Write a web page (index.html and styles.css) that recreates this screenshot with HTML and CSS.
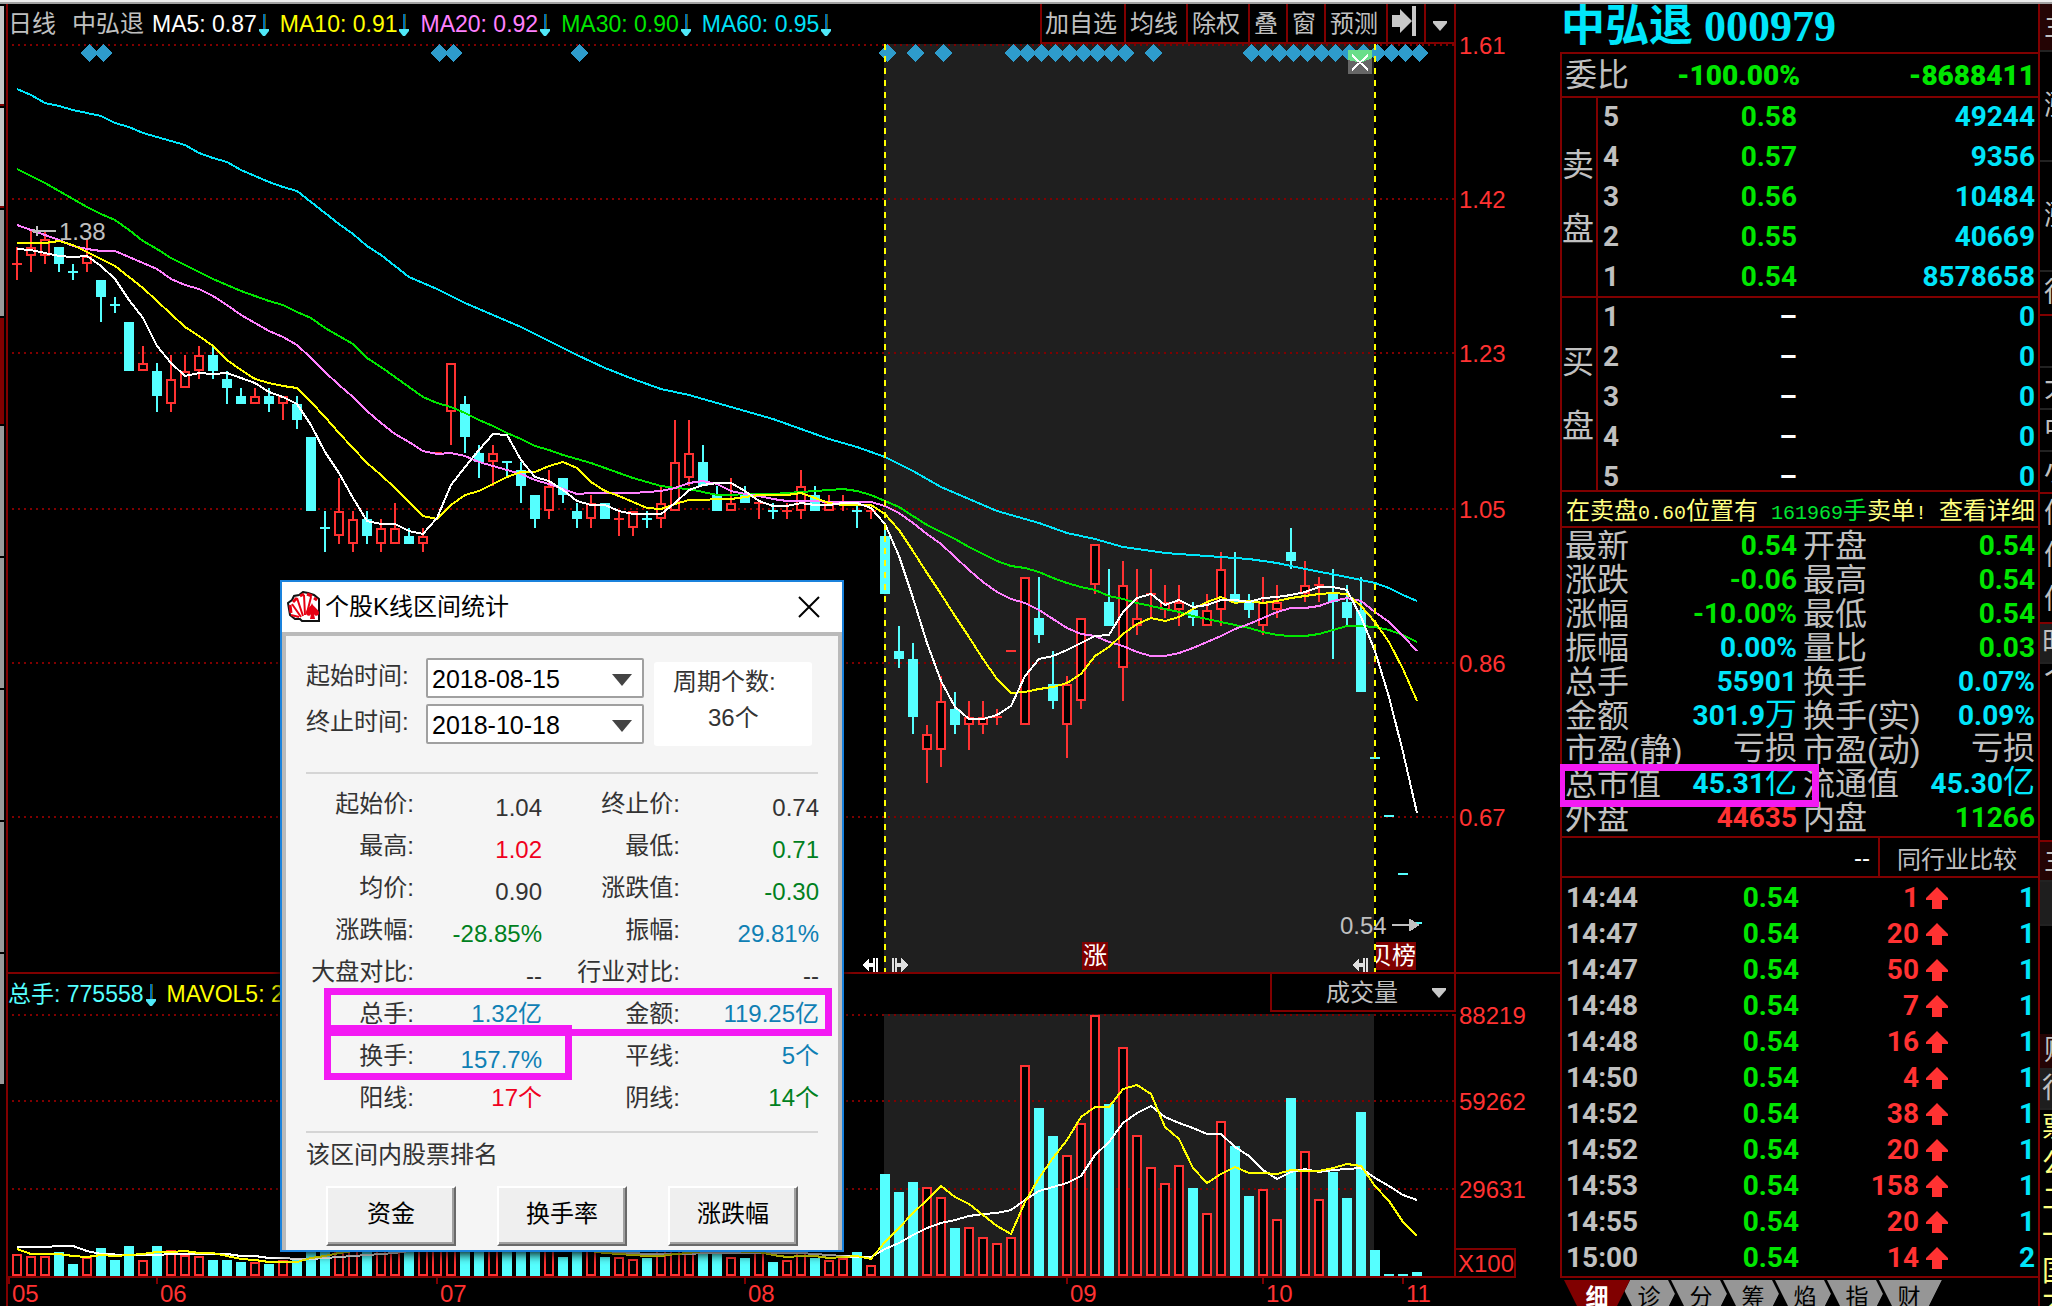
FILE: index.html
```html
<!DOCTYPE html>
<html lang="zh-CN">
<head>
<meta charset="utf-8">
<title>中弘退 000979</title>
<link rel="stylesheet" href="styles.css">
</head>
<body>
<div class="topstrip"></div>
<div class="app">
  <nav class="rail-left">
    <i class="r1"></i><i class="r1"></i><i class="r2"></i><i class="r3"></i><i class="r4"></i><i class="r4"></i><i class="r4"></i><i class="r4"></i><i class="r4"></i>
  </nav>

  <main class="chart">
    <header class="ma-bar">
      <span class="period">日线</span><span class="stock">中弘退</span>
      <span class="ma white">MA5: 0.87<svg class="down"><use href="#down"/></svg></span>
      <span class="ma yellow">MA10: 0.91<svg class="down"><use href="#down"/></svg></span>
      <span class="ma pink">MA20: 0.92<svg class="down"><use href="#down"/></svg></span>
      <span class="ma green">MA30: 0.90<svg class="down"><use href="#down"/></svg></span>
      <span class="ma sky">MA60: 0.95<svg class="down"><use href="#down"/></svg></span>
      <div class="tools">
        <button class="t3">加自选</button><button class="t2">均线</button><button class="t2">除权</button><button class="t1">叠</button><button class="t1">窗</button><button class="t2">预测</button><button class="t1" aria-label="移到最右"><svg width="24" height="30"><path d="M0 9h8V3l12 12L8 27v-6H0zM20 0h4v30h-4z"/></svg></button><button class="t0" aria-label="更多"><svg width="14" height="10"><path d="M0 0h14v2L7 10 0 2z"/></svg></button>
      </div>
    </header>
    <svg class="pane price" id="price"></svg>
    <div class="vol-bar">
      <span class="ma aqua"><b>总手</b>: 775558<svg class="down"><use href="#down"/></svg></span>
      <span class="ma yellow">MAVOL5: 29410</span>
      <button class="indicator">成交量<svg width="14" height="10"><path d="M0 0h14v2L7 10 0 2z"/></svg></button>
    </div>
    <svg class="pane volume" id="volume"></svg>

    <section class="dialog" role="dialog" aria-labelledby="dlg-title">
      <header>
        <svg width="34" height="32" viewBox="0 0 34 32">
          <path d="M2 18 1 12 5 9 7 5 12 4 16 1 21 2 27 4 32 8V30H15L13 28H8L3 24z" fill="#fff" stroke="#111" stroke-width="2"/>
          <path d="M4 22 3 14M6 11 10 7M13 5l4-2M20 3l5 2M27 7l3 2" stroke="#e60012" stroke-width="3" fill="none"/>
          <path d="M5 13 14 26M10 7 16 25M17 4 18 24M24 6 20 22M4 24l8 2" stroke="#e60012" stroke-width="2" fill="none"/>
          <path d="M25 12C24 16 19 18 19 22c0 3 4 4 5 1l-1 5h5l-1-5c1 3 5 2 5-1 0-4-6-6-7-10z" fill="#e60012"/>
        </svg>
        <h1 id="dlg-title">个股K线区间统计</h1>
        <button class="close" aria-label="关闭"><svg width="22" height="22"><path d="M1 1 21 21M21 1 1 21"/></svg></button>
      </header>
      <div class="dlg-body">
        <div class="range">
          <div class="fields">
            <div class="field"><label for="from">起始时间:</label><select id="from"><option>2018-08-15</option></select></div>
            <div class="field"><label for="to">终止时间:</label><select id="to"><option>2018-10-18</option></select></div>
          </div>
          <div class="count">周期个数:<span>36个</span></div>
        </div>
        <table class="figures">
          <tr><th>起始价:</th><td class="n">1.04</td><th>终止价:</th><td class="n">0.74</td></tr>
          <tr><th>最高:</th><td class="n c-red">1.02</td><th>最低:</th><td class="n c-green">0.71</td></tr>
          <tr><th>均价:</th><td class="n">0.90</td><th>涨跌值:</th><td class="n c-green">-0.30</td></tr>
          <tr><th>涨跌幅:</th><td class="n c-green">-28.85%</td><th>振幅:</th><td class="n c-blue">29.81%</td></tr>
          <tr><th>大盘对比:</th><td class="n">--</td><th>行业对比:</th><td class="n">--</td></tr>
          <tr><th>总手:</th><td class="c-blue">1.32亿</td><th>金额:</th><td class="c-blue">119.25亿</td></tr>
          <tr><th>换手:</th><td class="n c-blue">157.7%</td><th>平线:</th><td class="c-blue">5个</td></tr>
          <tr><th>阳线:</th><td class="c-red">17个</td><th>阴线:</th><td class="c-green">14个</td></tr>
        </table>
        <h2>该区间内股票排名</h2>
        <div class="ranks"><button>资金</button><button>换手率</button><button>涨跌幅</button></div>
      </div>
      <div class="mark mark-volume"></div>
      <div class="mark mark-turnover"></div>
    </section>
  </main>

  <aside class="quote">
    <h1 class="title">中弘退 000979</h1>
    <div class="box">
      <div class="ratio"><span>委比</span><b>-100.00%</b><b>-8688411</b></div>
      <div class="side sell"><div class="tag">卖<br>盘</div>
        <table>
          <tr><th>5</th><td class="p">0.58</td><td>49244</td></tr>
          <tr><th>4</th><td class="p">0.57</td><td>9356</td></tr>
          <tr><th>3</th><td class="p">0.56</td><td>10484</td></tr>
          <tr><th>2</th><td class="p">0.55</td><td>40669</td></tr>
          <tr><th>1</th><td class="p">0.54</td><td>8578658</td></tr>
        </table>
      </div>
      <div class="side buy"><div class="tag">买<br>盘</div>
        <table>
          <tr><th>1</th><td class="none">–</td><td>0</td></tr>
          <tr><th>2</th><td class="none">–</td><td>0</td></tr>
          <tr><th>3</th><td class="none">–</td><td>0</td></tr>
          <tr><th>4</th><td class="none">–</td><td>0</td></tr>
          <tr><th>5</th><td class="none">–</td><td>0</td></tr>
        </table>
      </div>
      <a class="notice" href="#"><span>在卖盘<i>0.60</i>位置有</span><span><em><i>161969</i>手</em>卖单<i>! </i>查看详细</span></a>
      <div class="stats-wrap">
        <table class="stats">
          <colgroup><col class="c1"><col class="c2"><col class="c3"><col class="c2"></colgroup>
          <tr><th>最新</th><td class="up">0.54</td><th>开盘</th><td class="up">0.54</td></tr>
          <tr><th>涨跌</th><td class="up">-0.06</td><th>最高</th><td class="up">0.54</td></tr>
          <tr><th>涨幅</th><td class="up">-10.00%</td><th>最低</th><td class="up">0.54</td></tr>
          <tr><th>振幅</th><td>0.00%</td><th>量比</th><td class="up">0.03</td></tr>
          <tr><th>总手</th><td>55901</td><th>换手</th><td>0.07%</td></tr>
          <tr><th>金额</th><td>301.9<u>万</u></td><th>换手(实)</th><td>0.09%</td></tr>
          <tr><th>市盈(静)</th><td class="loss"><u>亏损</u></td><th>市盈(动)</th><td class="loss"><u>亏损</u></td></tr>
          <tr><th>总市值</th><td>45.31<u>亿</u></td><th>流通值</th><td>45.30<u>亿</u></td></tr>
          <tr><th>外盘</th><td class="red">44635</td><th>内盘</th><td class="up">11266</td></tr>
        </table>
        <div class="mark mark-cap"></div>
      </div>
      <div class="compare"><span>--</span><button>同行业比较</button></div>
      <table class="ticks">
        <colgroup><col class="k1"><col class="k2"><col class="k3"><col class="k4"><col></colgroup>
        <tr><th>14:44</th><td>0.54</td><td class="red">1</td><td><svg><use href="#up"/></svg></td><td class="cyan">1</td></tr>
        <tr><th>14:47</th><td>0.54</td><td class="red">20</td><td><svg><use href="#up"/></svg></td><td class="cyan">1</td></tr>
        <tr><th>14:47</th><td>0.54</td><td class="red">50</td><td><svg><use href="#up"/></svg></td><td class="cyan">1</td></tr>
        <tr><th>14:48</th><td>0.54</td><td class="red">7</td><td><svg><use href="#up"/></svg></td><td class="cyan">1</td></tr>
        <tr><th>14:48</th><td>0.54</td><td class="red">16</td><td><svg><use href="#up"/></svg></td><td class="cyan">1</td></tr>
        <tr><th>14:50</th><td>0.54</td><td class="red">4</td><td><svg><use href="#up"/></svg></td><td class="cyan">1</td></tr>
        <tr><th>14:52</th><td>0.54</td><td class="red">38</td><td><svg><use href="#up"/></svg></td><td class="cyan">1</td></tr>
        <tr><th>14:52</th><td>0.54</td><td class="red">20</td><td><svg><use href="#up"/></svg></td><td class="cyan">1</td></tr>
        <tr><th>14:53</th><td>0.54</td><td class="red">158</td><td><svg><use href="#up"/></svg></td><td class="cyan">1</td></tr>
        <tr><th>14:55</th><td>0.54</td><td class="red">20</td><td><svg><use href="#up"/></svg></td><td class="cyan">1</td></tr>
        <tr><th>15:00</th><td>0.54</td><td class="red">14</td><td><svg><use href="#up"/></svg></td><td class="cyan">2</td></tr>
      </table>
    </div>
    <div class="tabs"><button class="on">细</button><button>诊</button><button>分</button><button>筹</button><button>焰</button><button>指</button><button>财</button></div>
  </aside>

  <aside class="rail-right">
    <div class="cell h48 wine">主</div>
    <div class="cell h110">涨</div>
    <div class="cell h110">涨</div>
    <div class="cell h44 redline">得</div>
    <div class="cell h52"></div>
    <div class="cell h42">大</div>
    <div class="cell h42">中</div>
    <div class="cell h42 redline">小</div>
    <div class="cell h42 plain">停</div>
    <div class="cell h42 plain">停</div>
    <div class="cell h46 redline">停</div>
    <div class="cell h40 dark">时</div>
    <div class="cell h178 redline top">个</div>
    <div class="cell h40 wine">主</div>
    <div class="cell h44 dark"></div>
    <div class="cell h108 plain"></div>
    <div class="cell h36 wine">财</div>
    <div class="cell h40 dark">行</div>
    <div class="news">票公二一国不</div>
  </aside>
</div>

<svg width="0" height="0" class="defs">
  <defs>
    <symbol id="down" viewBox="0 0 10 24"><path d="M4 2h2v18H4z" fill="#0070b8"/><path d="M6 2h1v16H6z" fill="#505800"/><path d="M0 17h10v2l-4 5H4l-4-5z" fill="#50e8f8"/></symbol>
    <symbol id="up" viewBox="0 0 22 22"><path d="M11 0 22 11v2h-6v9H6v-9H0v-2z" fill="#ff3232"/></symbol>
  </defs>
</svg>
<script src="chart.js"></script>
</body>
</html>
```
FILE: styles.css
```css
* { box-sizing: border-box; }
body {
  margin: 0;
  height: 100vh;
  overflow: hidden;
  display: flex;
  flex-direction: column;
  background: #000;
  color: #c0c0c0;
  font: 24px/28px "Liberation Sans", "Noto Sans CJK SC", sans-serif;
}
button, select { font: inherit; color: inherit; margin: 0; }
h1, h2 { margin: 0; font-weight: 400; }
table { border-collapse: collapse; }
th, td { padding: 0; font-weight: inherit; white-space: nowrap; }
u, em, i { text-decoration: none; font-style: normal; }
.defs { position: absolute; }

.topstrip { flex: none; height: 4px; background: #ececec; border-bottom: 2px solid #a0a0a0; }
.app { flex: 1; display: flex; min-height: 0; }

.rail-left { flex: none; width: 6px; padding: 2px 2px 0 0; display: flex; flex-direction: column; gap: 2px; }
.rail-left i { display: block; }
.r1 { height: 100px; background: #c4c4c4; border-bottom: 2px solid #800000; }
.r2 { height: 106px; background: #999; }
.r3 { height: 106px; background: #800000; }
.r4 { height: 130px; background: #999; }

/* chart area */
.chart { flex: 1; min-width: 0; position: relative; border-left: 2px solid #800000; display: flex; flex-direction: column; }
.ma-bar { flex: none; height: 40px; display: flex; align-items: center; margin-right: 104px; border-right: 2px solid #800000; font-size: 23px; white-space: nowrap; }
.period, .stock { font-size: 24px; }
.period { width: 64px; }
.stock { width: 80px; }
.ma { flex: none; display: flex; align-items: center; padding-right: 11px; }
.down { width: 10px; height: 24px; margin-left: 2px; }
.white { color: #fff; }
.yellow { color: #ff0; }
.pink { color: #ff80ff; }
.green { color: #00e600; }
.sky { color: #00e0f8; }
.aqua { color: #5ff; }
.aqua b { font-weight: 400; }
.tools { display: flex; align-self: stretch; margin-left: auto; }
.tools button { border: solid #800000; border-width: 0 0 2px 2px; background: #000; padding: 2px 4px 0 0; font-size: 24px; line-height: 28px; white-space: nowrap; }
.tools .t0 { padding: 0; }
.tools svg, .indicator svg { fill: #c8c8c8; }
.t0 { width: 30px; }
.t1 { width: 38px; }
.t2 { width: 62px; }
.t3 { width: 84px; }
.pane { flex: none; display: block; width: 100%; overflow: visible; shape-rendering: crispEdges; }
.price { height: 928px; }
.volume { height: 292px; }
.vol-bar { flex: none; height: 42px; display: flex; align-items: center; border-top: 2px solid #800000; padding-right: 104px; font-size: 23px; white-space: nowrap; }
.indicator { width: 186px; height: 38px; align-self: flex-start; margin-left: auto; border: solid #800000; border-width: 0 2px 2px; background: #000; display: flex; align-items: center; justify-content: flex-end; gap: 34px; padding: 2px 8px 0 10px; font-size: 24px; }
.pane text { font-size: 24px; fill: #ff3232; }
.pane text.grey { fill: #c0c0c0; }
.pane text.tag { fill: #fff; }

/* statistics dialog */
.dialog { position: absolute; left: 272px; top: 576px; width: 564px; height: 672px; border: 2px solid #1a82dc; background: #fff; color: #333; display: flex; flex-direction: column; box-shadow: 0 2px 10px #000; }
.dialog header { flex: none; height: 50px; display: flex; align-items: center; padding: 0 22px 0 5px; color: #000; }
.dialog header h1 { font-size: 24px; margin-left: 4px; flex: 1; }
.close { border: 0; background: none; padding: 0; display: flex; }
.close path { stroke: #000; stroke-width: 2; }
.dlg-body { flex: 1; border: solid #bababa; border-width: 4px 4px 0; background: #f5f5f5; padding: 22px 20px 4px; }
.range { display: flex; gap: 10px; height: 116px; border-bottom: 2px solid #d5d5d5; }
.fields { display: flex; flex-direction: column; gap: 6px; }
.field { position: relative; display: flex; }
.field label { width: 120px; line-height: 36px; }
.field select { width: 218px; height: 40px; border: 2px solid #a0a0a0; border-radius: 2px; padding: 2px 4px 0; color: #000; background: #fff; font-size: 25px; appearance: none; }
.field::after { content: ""; position: absolute; right: 12px; top: 16px; border: solid transparent; border-width: 12px 10px 0; border-top-color: #444; }
.count { width: 158px; height: 84px; margin-top: 4px; padding-top: 4px; background: #fff; border-radius: 3px; line-height: 32px; padding-left: 19px; }
.count span { display: block; padding-left: 35px; line-height: 40px; }
.figures { width: 513px; table-layout: fixed; margin-top: 9px; }
.figures tr { height: 42px; }
.figures th { width: 108px; text-align: right; }
.figures td { width: 128px; text-align: right; }
.figures th + td + th { width: 138px; }
.figures td:last-child { width: 139px; }
.figures td.n { padding-top: 8px; }
.c-red { color: #f00020; }
.c-green { color: #008020; }
.c-blue { color: #0f80b4; }
.dlg-body h2 { border-top: 2px solid #d5d5d5; margin-top: 12px; padding-top: 8px; font-size: 24px; line-height: 28px; }
.ranks { display: flex; gap: 41px; padding: 17px 0 0 20px; }
.ranks button { width: 130px; height: 60px; background: #efefef; color: #000; border: 2px solid; border-color: #fff #696969 #696969 #fff; box-shadow: inset -2px -2px #a0a0a0; padding: 0 0 4px; }
.mark { position: absolute; border: 7px solid #f31af3; pointer-events: none; }
.mark-volume { left: 42px; top: 406px; width: 508px; height: 48px; }
.mark-turnover { left: 42px; top: 443px; width: 248px; height: 55px; }

/* quote panel */
.quote { flex: none; width: 480px; border-right: 2px solid #800000; overflow: hidden; font: bold 28px/32px Roboto, "Noto Sans CJK SC", sans-serif; color: #00e5fa; }
.title { height: 48px; padding-left: 1px; font: bold 44px/46px "Liberation Serif", "Noto Sans CJK SC", serif; white-space: nowrap; }
.box { border: solid #800000; border-width: 2px 0 2px 2px; }
.ratio { display: grid; grid-template-columns: 110px 125px 1fr; height: 44px; align-items: center; border-bottom: 2px solid #800000; color: #00e600; text-align: right; padding: 0 3px; }
.ratio b { padding-top: 2px; }
.ratio span, .stats th, .tag, .quote u { font: 400 32px/34px "Liberation Sans", "Noto Sans CJK SC", sans-serif; }
.ratio span, .stats th, .tag { color: #c0c0c0; text-align: left; }
.side { display: flex; border-bottom: 2px solid #800000; }
.sell { height: 200px; }
.buy { height: 194px; }
.side .tag { width: 36px; border-right: 2px solid #800000; line-height: 64px; display: flex; align-items: center; }
.side table { flex: 1; table-layout: fixed; margin-right: 3px; height: 200px; }
.side tr { height: 40px; }
.side th { width: 40px; padding: 0 0 2px 5px; text-align: left; color: #c0c0c0; }
.side td { text-align: right; padding-bottom: 2px; }
.side .p, .side .none { width: 159px; color: #00e600; }
.side .none { color: #fff; }
.notice { display: flex; justify-content: space-between; height: 36px; padding: 0 3px 0 4px; border-bottom: 2px solid #800000; color: #ffff80; text-decoration: none; font: 400 24px/34px "Noto Sans CJK SC", sans-serif; white-space: pre; }
.notice i { font: 400 20px/30px "Liberation Mono", monospace; }
.notice em { color: #00e632; }
.stats-wrap { position: relative; height: 310px; border-bottom: 2px solid #800000; padding: 1px 3px 0; }
.stats { width: 100%; table-layout: fixed; }
.stats tr { height: 34px; line-height: 28px; }
.stats td { text-align: right; }
.quote .stats u, .quote .stats th { line-height: 24px; }
.c1 { width: 111px; }
.c2 { width: 121px; }
.c3 { width: 117px; }
.stats th:nth-child(3) { padding-left: 6px; }
.up { color: #00e600; }
.red { color: #ff3232; }
.cyan { color: #00e5fa; }
.loss { color: #c0c0c0; }
.mark-cap { left: -4px; top: 236px; width: 261px; height: 43px; }
.compare { display: flex; height: 40px; border-bottom: 2px solid #800000; justify-content: flex-end; font: 400 24px/36px "Liberation Sans", "Noto Sans CJK SC", sans-serif; color: #fff; }
.compare span { padding: 2px 8px 0 0; }
.compare button { width: 160px; border: 0; border-left: 2px solid #800000; background: #000; color: #c0c0c0; padding: 4px 4px 0 0; }
.ticks { width: 469px; margin: 2px 3px 0 4px; table-layout: fixed; color: #00e600; }
.ticks tr { height: 36px; }
.ticks th { text-align: left; color: #c0c0c0; }
.ticks td { text-align: right; line-height: 34px; }
.ticks svg { width: 22px; height: 22px; display: block; margin: 0 0 0 7px; }
.k1 { width: 110px; }
.k2 { width: 123px; }
.k3 { width: 120px; }
.k4 { width: 36px; }
.tabs { display: flex; padding: 2px 0 0 4px; }
.tabs button { position: relative; flex: none; width: 66px; height: 28px; margin-right: -14px; border: 0; padding: 2px 0 0; background: #000; color: #000; font: 400 23px/26px "Noto Sans CJK SC", sans-serif; clip-path: polygon(0 0, 100% 0, 52px 100%, 14px 100%); z-index: 0; display: flex; justify-content: center; }
.tabs button::before { content: ""; position: absolute; inset: 0; z-index: -1; background: #969696; clip-path: polygon(3px 0, 100% 0, 52px 100%, 17px 100%); }
.tabs .on { z-index: 1; color: #fff; font-weight: 700; }
.tabs .on::before { background: #800000; clip-path: none; }

/* clipped panel at the right edge */
.rail-right { flex: none; width: 12px; overflow: hidden; font-size: 28px; line-height: 28px; }
.cell { display: flex; align-items: center; padding-left: 4px; border-bottom: 2px solid #222; white-space: nowrap; }
.plain { border-color: #000; }
.redline { border-color: #800000; }
.wine { background: #240404; }
.dark { background: #1e1e1e; padding-left: 2px; }
.top { align-items: flex-start; }
.h36 { height: 36px; } .h40 { height: 40px; } .h42 { height: 42px; } .h44 { height: 44px; } .h46 { height: 46px; } .h48 { height: 48px; }
.h52 { height: 52px; } .h108 { height: 108px; } .h110 { height: 110px; } .h178 { height: 178px; }
.news { width: 28px; padding-left: 2px; color: #ffff80; line-height: 36px; word-break: break-all; }
```
FILE: chart.js
```js
// Candles: [rising, body high, body low, high, low], prices in cents.
const candles = [
[1,134,134,136,132],[1,136,135,138,133],[1,137,135,138,134],[0,136,134,136,133],[0,133,133,134,132],
[1,135,134,137,133],[0,132,130,132,127],[0,129,129,130,128],[0,127,121,127,121],[1,122,121,124,121],
[0,121,118,122,116],[1,120,117,123,116],[1,121,119,123,119],[1,123,121,124,120],[0,123,121,124,120],
[0,120,119,121,117],[0,118,117,119,117],[1,118,117,119,117],[0,118,117,119,116],[1,118,117,118,115],
[0,117,115,118,114],[0,113,104,113,104],[0,102,102,104,99],[1,104,101,108,100],[1,103,100,104,99],
[0,103,101,104,100],[1,102,100,103,99],[1,102,100,105,100],[0,101,100,102,100],[1,101,100,102,99],
[1,111,111,111,111],[1,122,116,122,112],[0,117,113,118,111],[0,111,110,112,108],[1,111,110,112,107],
[0,110,110,110,108],[0,109,107,110,105],[0,106,103,106,102],[1,107,104,109,103],[0,108,106,108,105],
[0,104,103,105,102],[1,105,103,106,102],[0,105,103,105,103],[1,103,103,104,101],[1,104,102,104,101],
[0,103,103,104,102],[1,105,103,107,102],[1,110,104,115,104],[1,111,108,115,107],[0,110,107,112,107],
[0,106,104,107,104],[1,105,104,108,104],[0,106,105,107,105],[1,105,105,105,103],[0,104,104,105,103],
[1,104,104,105,103],[1,107,104,109,103],[0,106,104,107,104],[1,105,104,106,104],[1,105,105,106,104],
[0,104,104,105,102],[1,104,104,104,103],[0,101,94,102,94],[0,87,86,90,85],[0,86,79,88,77],
[1,77,75,78,71],[1,81,75,84,73],[0,80,78,82,77],[1,79,78,81,75],[1,79,78,81,77],
[1,79,79,80,78],[1,87,87,87,87],[1,96,78,96,78],[0,91,89,96,88],[0,83,81,87,80],
[1,83,78,84,74],[1,91,81,91,80],[1,100,95,100,94],[0,93,90,97,90],[1,95,85,98,81],
[1,91,90,97,89],[1,94,94,97,91],[1,93,92,95,91],[1,93,92,95,90],[0,92,91,93,90],
[1,92,90,94,90],[1,97,92,99,90],[0,94,93,99,93],[0,93,92,94,91],[1,93,90,96,89],
[1,93,92,95,91],[0,99,98,102,97],[1,95,94,98,93],[1,95,95,96,93],[0,94,93,97,86],
[0,93,91,95,90],[0,92,82,96,82],[0,74,74,74,74],[0,67,67,67,67],[0,60,60,60,60],[0,54,54,54,54]];

const vol = [22,20,20,24,12,19,28,16,30,16,30,26,21,20,16,16,14,14,12,16,16,30,28,26,26,26,26,26,28,26,27,27,28,28,26,28,28,27,26,
19,26,26,19,19,17,18,26,28,26,28,27,19,18,26,14,16,26,18,16,18,24,11,
102,84,94,89,79,48,49,39,33,39,211,168,140,121,153,261,172,229,141,109,93,111,88,63,155,130,80,87,57,178,125,77,104,78,164,26,2,2,4];

const RED = '#ff3232', AQUA = '#55ffff', LINE = '#800000';
const X = i => 17 + 14 * i;
const Y = p => 816 - (p - 67) * 8.24;
const BASE = 1276;
const closes = candles.map(c => c[0] ? c[1] : c[2]);

const rect = (x, y, w, h, fill, stroke) =>
  `<rect x="${x}" y="${y}" width="${w}" height="${h}" fill="${fill}"${stroke ? ` stroke="${stroke}" stroke-width="2"` : ''}/>`;
const text = (x, y, s, cls = '') => `<text x="${x}" y="${y}" class="${cls}">${s}</text>`;
const poly = (pts, c) => `<polyline points="${pts.map(p => p.join()).join(' ')}" fill="none" stroke="${c}" stroke-width="2"/>`;
const dots = y => `<path d="M12 ${y}H1455" stroke="${LINE}" stroke-width="2" stroke-dasharray="2 4"/>`;

// Moving average; the first points come from data older than the window.
function average(values, n, lead, toY) {
  const pts = lead.map(([i, y]) => [X(i), y]);
  for (let i = n - 1; i < values.length; i++) {
    let sum = 0;
    for (let k = 0; k < n; k++) sum += values[i - k];
    pts.push([X(i), Math.round(toY(sum / n))]);
  }
  return pts;
}
const seq = ys => ys.map((y, i) => [i, y]);

let s = '<g transform="translate(-8,-44)">';
s += rect(884, 44, 490, 928, '#1f1f1f');
[45, 199, 353, 509, 663, 817].forEach((y, i) => {
  s += dots(y) + text(1459, y + 9, ['1.61', '1.42', '1.23', '1.05', '0.86', '0.67'][i]);
});
s += `<path d="M1455 44V972" stroke="${LINE}" stroke-width="2"/>`;
candles.forEach(([up, top, bot, hi, lo], i) => {
  const x = X(i), c = up ? RED : AQUA, yt = Math.round(Y(top)), yb = Math.round(Y(bot));
  const yh = Math.round(Y(hi)), yl = Math.round(Y(lo));
  if (yl > yh) s += rect(x - 1, yh, 2, yl - yh, c);
  if (top === bot) s += rect(x - 5, yt - 1, 10, 2, c);
  else if (up) s += rect(x - 4, yt + 1, 8, yb - yt - 2, '#000', c);
  else s += rect(x - 5, yt, 10, yb - yt, c);
});
s += poly([[0,89],[1,95],[2,103],[3,106],[4,110],[5,113],[6,116],[7,123],[8,127],[9,133],[10,137],[11,141],[12,145],[13,153],[14,158],[15,162],[16,170],[17,176],[18,182],[19,187],[20,191],[21,202],[22,213],[23,224],[24,234],[25,246],[26,255],[27,266],[28,277],[30,289],[32,303],[34,315],[36,327],[38,341],[40,355],[42,368],[44,379],[46,389],[48,395],[50,403],[52,411],[54,419],[56,429],[58,439],[60,447],[62,457],[64,471],[66,487],[67,493],[70,511],[73,523],[75,533],[77,539],[79,547],[82,553],[86,557],[88,559],[90,563],[92,569],[95,577],[97,583],[98,588],[99,595],[100,601]].map(([i, y]) => [X(i), y]), '#00e5fa');
s += poly(average(closes, 30, seq([169,176,183,191,199,207,214,220,230,241,249,258,265,272,279,285,291,296,301,305,312,318,328,336,344,358,367,377,387]), Y), '#00e600');
s += poly(average(closes, 20, seq([225,230,235,240,246,249,251,251,257,263,269,279,285,289,296,305,315,323,331]), Y), '#ff80ff');
s += poly(average(closes, 10, seq([243,243,243,241,245,252,259,266,277]), Y), '#ffff00');
s += poly(average(closes, 5, seq([249,250,253,256]), Y), '#ffffff');

[5,6,30,31,40,62,64,66,71,72,73,74,75,76,77,78,79,81,88,89,90,91,92,93,94,95,96,97,98,99,100].forEach(i => {
  const x = X(i) + 2;
  s += `<path d="M${x} 44l9 9-9 9-9-9z" fill="#2e9ccc"/>`;
});
s += '<path d="M885 44V972M1375 44V972" stroke="#ffff00" stroke-width="2" stroke-dasharray="6 6"/>';
s += rect(1348, 50, 24, 24, '#666') + '<path d="M1348 50h24v8l-9 4-6 0-9-2z" fill="#6ade8a"/>';
s += '<path d="M1352 55l16 15M1368 55l-16 15" stroke="#fff" stroke-width="2"/>';

s += text(59, 240, '1.38', 'grey') + '<path d="M32 231H56M37 226v10M34 229v4" stroke="#c0c0c0" stroke-width="2"/>';
s += text(1340, 934, '0.54', 'grey') + '<path d="M1392 925h20M1410 920l8 5-8 5z" stroke="#c0c0c0" stroke-width="2" fill="#c0c0c0"/>';
s += rect(1082, 942, 26, 28, LINE) + text(1083, 964, '涨', 'tag');
s += '<clipPath id="cut"><rect x="1376" y="942" width="40" height="28"/></clipPath><g clip-path="url(#cut)">' + rect(1376, 942, 40, 28, LINE) + text(1368, 964, '贝榜', 'tag') + '</g>';
const handle = (x, d, c) => `<path transform="translate(${x},965) scale(${d},1)" d="M-8 0l7-7v5h4v-5h2v14h-2v-5h-4v5zM6 -7h2v14h-2z" fill="${c}"/>`;
s += handle(870, 1, '#fff') + handle(900, -1, '#e0e0e0') + handle(1360, 1, '#e0e0e0');
document.getElementById('price').innerHTML = s + '</g>';

let v = '<g transform="translate(-8,-1014)">';
v += rect(884, 1014, 490, 262, '#1f1f1f') + dots(1015) + dots(1101) + dots(1189);
vol.forEach((h, i) => {
  const x = X(i);
  v += candles[i][0] ? rect(x - 4, BASE - h + 1, 8, h - 2, '#000', RED) : rect(x - 5, BASE - h, 10, h, AQUA);
});
const VY = h => BASE - h;
v += poly(average(vol, 10, [[0,1247],[2,1247],[3,1246],[4,1246],[5,1251],[6,1254],[8,1255]], VY), '#ffffff');
v += poly(average(vol, 5, [[0,1249],[1,1254],[3,1254]], VY), '#ffff00');
v += `<path d="M8 1277H1516M1455 1014V1277M1455 1249H1515V1277" fill="none" stroke="${LINE}" stroke-width="2"/>`;
[['88219',1015],['59262',1101],['29631',1189]].forEach(([t, y]) => v += text(1459, y + 9, t));
v += text(1458, 1272, 'X100');
[['05',9],['06',157],['07',437],['08',745],['09',1067],['10',1263],['11',1403]].forEach(([t, x]) => {
  v += rect(x - 1, 1278, 2, 6, LINE) + text(x + 3, 1302, t);
});
document.getElementById('volume').innerHTML = v + '</g>';
```
